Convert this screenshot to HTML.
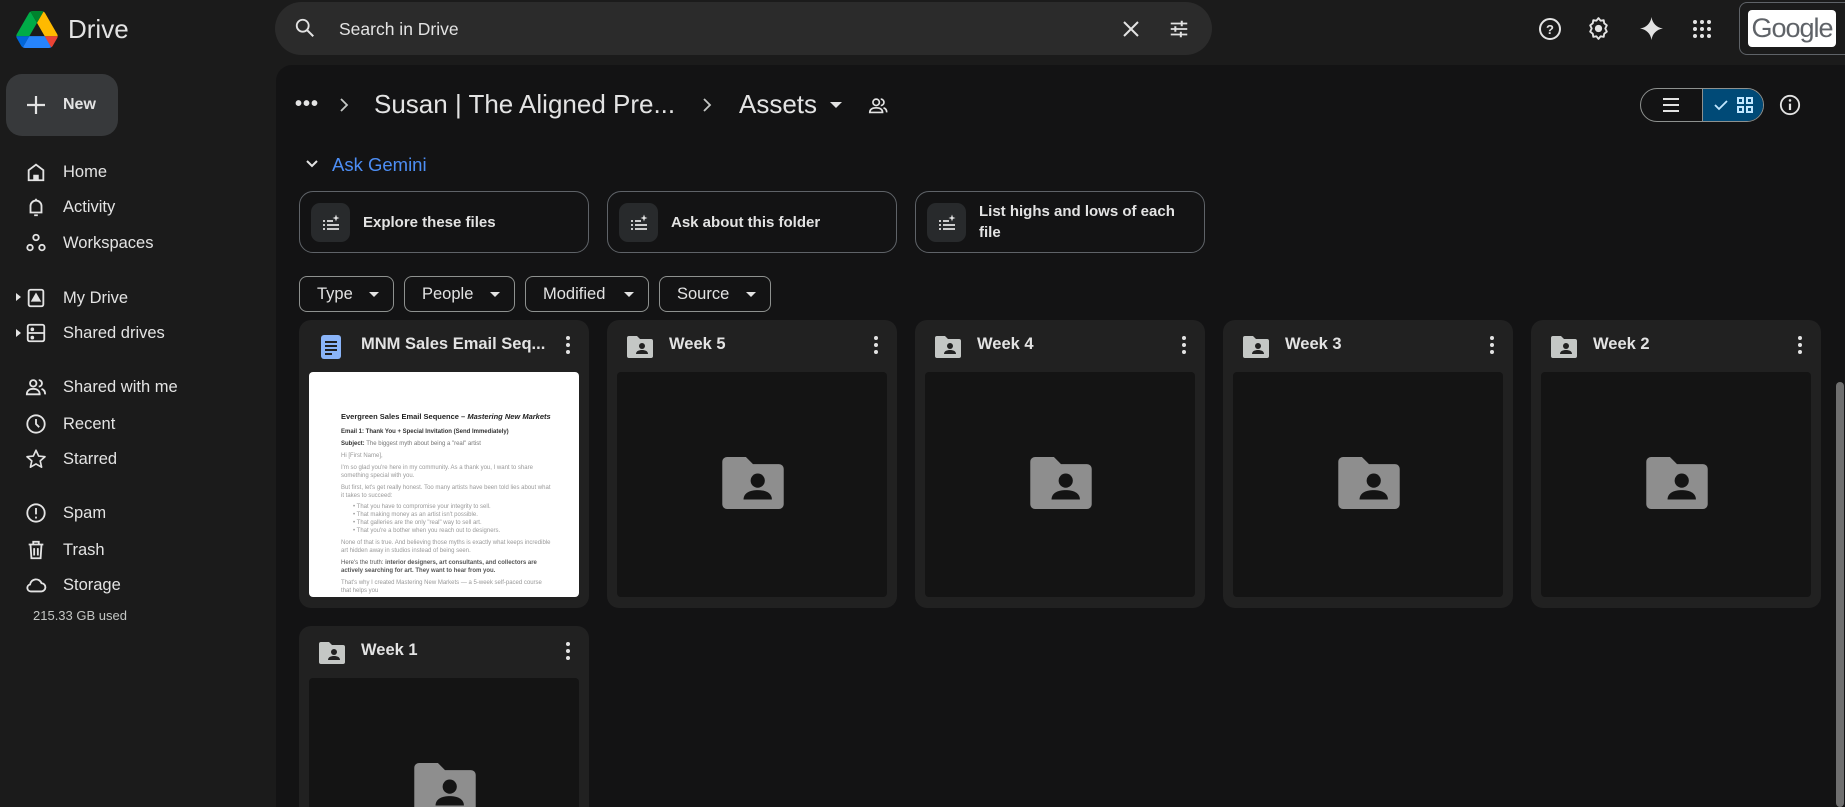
<!DOCTYPE html>
<html><head><meta charset="utf-8"><style>
*{box-sizing:border-box;margin:0;padding:0}
html,body{width:1845px;height:807px;overflow:hidden}
body{background:#1b1b1b;font-family:"Liberation Sans",Arial,sans-serif;color:#e3e3e3}
#w{position:relative;width:1845px;height:807px;overflow:hidden}
.a{position:absolute}
svg{display:block}
.nav{position:absolute;left:0;width:276px;height:34px;font-size:16.5px;display:flex;align-items:center}
.nav svg{position:absolute;left:25px}
.nav span{position:absolute;left:63px}
.gc{position:absolute;top:191px;width:290px;height:62px;border:1px solid #5f6368;border-radius:14px;display:flex;align-items:center;font-size:15px;font-weight:bold;color:#e3e3e3}
.gc .ic{position:absolute;left:11px;top:11px;width:39px;height:39px;border-radius:9px;background:#282a2c}
.gc .ic svg{margin:10px}
.gc span{position:absolute;left:63px;line-height:21px}
.chip{position:absolute;top:276px;height:36px;border:1px solid #8e918f;border-radius:8px;font-size:16.5px;display:flex;align-items:center;padding-left:17px}
.chip:after{content:"";position:absolute;right:14px;top:15px;border:5px solid transparent;border-top-color:#e3e3e3}
.card{position:absolute;width:290px;height:288px;background:#212121;border-radius:12px;overflow:hidden}
.card .t{position:absolute;left:62px;top:15px;font-size:16.5px;font-weight:bold;color:#e3e3e3}
.card .fi{position:absolute;left:18px;top:13px}
.card .m{position:absolute;right:18px;top:15px}
.card .th{position:absolute;left:10px;top:52px;width:270px;height:225px;background:#141414;border-radius:4px}
.card .big{position:absolute;left:105px;top:85px}
</style></head><body><div id="w">
<svg class="a" style="left:15px;top:11px" width="44" height="37" viewBox="0 0 87.3 78"><path d="M6.6 66.85l3.85 6.65c.8 1.4 1.950 2.5 3.3 3.3L27.5 53H0c0 1.55.4 3.1 1.2 4.5z" fill="#0066da"/><path d="M43.65 25L29.9 1.2c-1.35.8-2.5 1.9-3.3 3.3l-25.4 44A9.06 9.06 0 000 53h27.5z" fill="#00ac47"/><path d="M73.55 76.8c1.35-.8 2.5-1.9 3.3-3.3l1.6-2.75 7.65-13.25c.8-1.4 1.2-2.95 1.2-4.5H59.8l5.85 11.5z" fill="#ea4335"/><path d="M43.65 25L57.4 1.2C56.05.4 54.5 0 52.9 0H34.4c-1.6 0-3.15.45-4.5 1.2z" fill="#00832d"/><path d="M59.8 53H27.5L13.75 76.8c1.35.8 2.9 1.2 4.5 1.2h50.8c1.6 0 3.150-.45 4.5-1.2z" fill="#2684fc"/><path d="M73.4 26.5l-12.7-22c-.8-1.4-1.95-2.5-3.3-3.3L43.65 25 59.8 53h27.45c0-1.55-.4-3.1-1.2-4.5z" fill="#ffba00"/></svg>
<div class="a" style="left:68px;top:14px;font-size:26px;color:#e3e3e3">Drive</div>
<div class="a" style="left:275px;top:2px;width:937px;height:53px;background:#2b2b2b;border-radius:27px"></div>
<svg class="a" style="left:294px;top:17px" width="22" height="22" viewBox="0 0 24 24"><circle cx="9.5" cy="9.5" r="6.5" fill="none" stroke="#e3e3e3" stroke-width="2"/><path d="M14.5 14.5L21 21" stroke="#e3e3e3" stroke-width="2.2"/></svg>
<div class="a" style="left:339px;top:19px;font-size:17.5px;color:#e3e3e3">Search in Drive</div>
<svg class="a" style="left:1121px;top:19px" width="20" height="20" viewBox="0 0 20 20"><path d="M3 3L17 17M17 3L3 17" stroke="#e3e3e3" stroke-width="2"/></svg>
<svg class="a" style="left:1168px;top:18px" width="22" height="22" viewBox="0 0 24 24" fill="none" stroke="#e3e3e3" stroke-width="2"><path d="M3 6h18M3 12h18M3 18h18"/><path d="M15 3v6M8 9v6M14 15v6" stroke-width="2.2"/></svg>
<svg class="a" style="left:1538px;top:17px" width="24" height="24" viewBox="0 0 24 24"><circle cx="12" cy="12" r="10" fill="none" stroke="#e3e3e3" stroke-width="2"/><text x="12" y="17" text-anchor="middle" font-size="13" font-weight="bold" fill="#e3e3e3" font-family="Liberation Sans">?</text></svg>
<svg class="a" style="left:1586px;top:16px" width="25" height="25" viewBox="0 0 24 24"><path d="M12 2l2 2.5 3-.5.5 3 2.5 2-1.5 3 1.5 3-2.5 2-.5 3-3-.5-2 2.5-2-2.5-3 .5-.5-3-2.5-2 1.5-3-1.5-3 2.5-2 .5-3 3 .5z" fill="none" stroke="#e3e3e3" stroke-width="1.8" stroke-linejoin="round"/><circle cx="12" cy="12" r="3.5" fill="#e3e3e3"/></svg>
<svg class="a" style="left:1639px;top:16px" width="25" height="25" viewBox="0 0 24 24"><path d="M12 1C12.8 7 17 11.2 23 12 17 12.8 12.8 17 12 23 11.2 17 7 12.8 1 12 7 11.2 11.2 7 12 1z" fill="#e3e3e3"/></svg>
<svg class="a" style="left:1692px;top:19px" width="20" height="20" viewBox="0 0 20 20" fill="#e3e3e3"><circle cx="3" cy="3" r="2"/><circle cx="10" cy="3" r="2"/><circle cx="17" cy="3" r="2"/><circle cx="3" cy="10" r="2"/><circle cx="10" cy="10" r="2"/><circle cx="17" cy="10" r="2"/><circle cx="3" cy="17" r="2"/><circle cx="10" cy="17" r="2"/><circle cx="17" cy="17" r="2"/></svg>
<div class="a" style="left:1739px;top:2px;width:120px;height:53px;border:1px solid #5f6368;border-radius:8px"></div>
<div class="a" style="left:1748px;top:10px;width:88px;height:37px;background:#fff;border-radius:4px;color:#5f6368;font-size:27px;text-align:center;line-height:37px;letter-spacing:-1px">Google</div>
<div class="a" style="left:6px;top:74px;width:112px;height:62px;background:#37393b;border-radius:16px"></div>
<svg class="a" style="left:26px;top:95px" width="20" height="20" viewBox="0 0 20 20"><path d="M10 1v18M1 10h18" stroke="#e3e3e3" stroke-width="2.2"/></svg>
<div class="a" style="left:63px;top:96px;font-size:16px;font-weight:bold">New</div>
<div class="nav" style="top:155px"><svg width="22" height="22" viewBox="0 0 24 24" fill="none" stroke="#e3e3e3" stroke-width="2"><path d="M4 21V10l8-6 8 6v11z"/><path d="M10 21v-5h4v5" fill="#e3e3e3"/></svg><span>Home</span></div>
<div class="nav" style="top:190px"><svg width="22" height="22" viewBox="0 0 24 24" fill="none" stroke="#e3e3e3" stroke-width="2"><path d="M6 18V11a6 6 0 0112 0v7H5h14M12 3v2M10 21h4"/></svg><span>Activity</span></div>
<div class="nav" style="top:226px"><svg width="22" height="22" viewBox="0 0 24 24" fill="none" stroke="#e3e3e3" stroke-width="2"><circle cx="12" cy="6" r="3"/><circle cx="5.5" cy="17" r="3"/><circle cx="18.5" cy="17" r="3"/></svg><span>Workspaces</span></div>
<div class="a" style="left:16px;top:293px;border:4px solid transparent;border-left:5px solid #e3e3e3"></div>
<div class="nav" style="top:281px"><svg width="22" height="22" viewBox="0 0 24 24" fill="none" stroke="#e3e3e3" stroke-width="2"><rect x="4" y="3" width="16" height="18" rx="2"/><path d="M8 15h8l-4-7z" fill="#e3e3e3"/></svg><span>My Drive</span></div>
<div class="a" style="left:16px;top:329px;border:4px solid transparent;border-left:5px solid #e3e3e3"></div>
<div class="nav" style="top:316px"><svg width="22" height="22" viewBox="0 0 24 24" fill="none" stroke="#e3e3e3" stroke-width="2"><rect x="3" y="3" width="18" height="18" rx="2"/><path d="M3 12h18"/><circle cx="8" cy="8" r="1" fill="#e3e3e3"/><circle cx="8" cy="17" r="1" fill="#e3e3e3"/></svg><span>Shared drives</span></div>
<div class="nav" style="top:370px"><svg width="22" height="22" viewBox="0 0 24 24" fill="none" stroke="#e3e3e3" stroke-width="2"><circle cx="9" cy="8" r="3.5"/><path d="M2 20c0-4 3-6 7-6s7 2 7 6zM15 4.5a3.5 3.5 0 010 7M18 14c2.5.8 4 2.5 4 6"/></svg><span>Shared with me</span></div>
<div class="nav" style="top:407px"><svg width="22" height="22" viewBox="0 0 24 24" fill="none" stroke="#e3e3e3" stroke-width="2"><circle cx="12" cy="12" r="9.5"/><path d="M12 6.5V12l3.5 3.5"/></svg><span>Recent</span></div>
<div class="nav" style="top:442px"><svg width="22" height="22" viewBox="0 0 24 24" fill="none" stroke="#e3e3e3" stroke-width="1.8" stroke-linejoin="round"><path d="M12 2.5l2.9 6.3 6.9.7-5.2 4.6 1.5 6.8L12 17.4l-6.1 3.5 1.5-6.8-5.2-4.6 6.9-.7z"/></svg><span>Starred</span></div>
<div class="nav" style="top:496px"><svg width="22" height="22" viewBox="0 0 24 24" fill="none" stroke="#e3e3e3" stroke-width="2"><circle cx="12" cy="12" r="9.5"/><path d="M12 6.5v7M12 16v2"/></svg><span>Spam</span></div>
<div class="nav" style="top:533px"><svg width="22" height="22" viewBox="0 0 24 24" fill="none" stroke="#e3e3e3" stroke-width="2"><path d="M4 6h16M9 6V3h6v3M6 6l1 15h10l1-15M10 10v8M14 10v8"/></svg><span>Trash</span></div>
<div class="nav" style="top:568px"><svg width="22" height="22" viewBox="0 0 24 24" fill="none" stroke="#e3e3e3" stroke-width="2"><path d="M6.5 19h11a4.5 4.5 0 00.5-9 6.5 6.5 0 00-12.5 1.5A3.8 3.8 0 006.5 19z"/></svg><span>Storage</span></div>
<div class="a" style="left:33px;top:608px;font-size:13px;color:#c4c7c5">215.33 GB used</div>
<div class="a" style="left:276px;top:65px;width:1569px;height:742px;background:#131314;border-radius:16px 0 0 0"></div>
<div class="a" style="left:295px;top:93px;font-size:20px;font-weight:bold;letter-spacing:1px">•••</div>
<svg class="a" style="left:337px;top:96px" width="14" height="18" viewBox="0 0 14 18"><path d="M4 3l6 6-6 6" fill="none" stroke="#c4c7c5" stroke-width="1.8"/></svg>
<div class="a" style="left:374px;top:89px;font-size:26px;color:#e3e3e3">Susan | The Aligned Pre...</div>
<svg class="a" style="left:700px;top:96px" width="14" height="18" viewBox="0 0 14 18"><path d="M4 3l6 6-6 6" fill="none" stroke="#c4c7c5" stroke-width="1.8"/></svg>
<div class="a" style="left:739px;top:89px;font-size:26px;color:#e3e3e3">Assets</div>
<div class="a" style="left:830px;top:102px;border:6px solid transparent;border-top:6px solid #e3e3e3"></div>
<svg class="a" style="left:867px;top:95px" width="22" height="22" viewBox="0 0 24 24" fill="none" stroke="#e3e3e3" stroke-width="1.8"><circle cx="10" cy="8" r="3.5"/><path d="M3 19c0-3.5 3-5 7-5s7 1.5 7 5zM15 4.5a3.5 3.5 0 010 7M18 14c2 .6 3.5 2 3.5 5"/></svg>
<div class="a" style="left:1640px;top:88px;width:124px;height:34px;border:1px solid #8e918f;border-radius:17px;overflow:hidden"><div style="position:absolute;left:61px;top:0;width:63px;height:34px;background:#004a77;border-left:1px solid #8e918f"></div></div>
<svg class="a" style="left:1662px;top:97px" width="18" height="16" viewBox="0 0 18 16"><path d="M1 2h16M1 8h16M1 14h16" stroke="#e3e3e3" stroke-width="2"/></svg>
<svg class="a" style="left:1713px;top:97px" width="16" height="16" viewBox="0 0 16 16"><path d="M2 8l4 4 8-8" fill="none" stroke="#c2e7ff" stroke-width="1.8"/></svg>
<svg class="a" style="left:1737px;top:97px" width="16" height="16" viewBox="0 0 16 16" fill="none" stroke="#c2e7ff" stroke-width="2"><rect x="1" y="1" width="5" height="5"/><rect x="10" y="1" width="5" height="5"/><rect x="1" y="10" width="5" height="5"/><rect x="10" y="10" width="5" height="5"/></svg>
<svg class="a" style="left:1779px;top:94px" width="22" height="22" viewBox="0 0 24 24"><circle cx="12" cy="12" r="10" fill="none" stroke="#e3e3e3" stroke-width="2"/><path d="M12 10.5v7" stroke="#e3e3e3" stroke-width="2.4"/><circle cx="12" cy="7" r="1.4" fill="#e3e3e3"/></svg>
<svg class="a" style="left:305px;top:157px" width="14" height="14" viewBox="0 0 14 14"><path d="M2 4l5 5 5-5" fill="none" stroke="#e3e3e3" stroke-width="2"/></svg>
<div class="a" style="left:332px;top:154px;font-size:18.5px;color:#4d8ef5">Ask Gemini</div>
<div class="gc" style="left:299px"><div class="ic"><svg width="20" height="20" viewBox="0 0 20 20" fill="none" stroke="#e3e3e3" stroke-width="1.8"><path d="M2 8h2M6 8h6M2 12h2M6 12h12M2 16h2M6 16h12"/><path d="M15 1.5l.9 2.6 2.6.9-2.6.9-.9 2.6-.9-2.6-2.6-.9 2.6-.9z" fill="#e3e3e3" stroke="none"/></svg></div><span>Explore these files</span></div>
<div class="gc" style="left:607px"><div class="ic"><svg width="20" height="20" viewBox="0 0 20 20" fill="none" stroke="#e3e3e3" stroke-width="1.8"><path d="M2 8h2M6 8h6M2 12h2M6 12h12M2 16h2M6 16h12"/><path d="M15 1.5l.9 2.6 2.6.9-2.6.9-.9 2.6-.9-2.6-2.6-.9 2.6-.9z" fill="#e3e3e3" stroke="none"/></svg></div><span>Ask about this folder</span></div>
<div class="gc" style="left:915px"><div class="ic"><svg width="20" height="20" viewBox="0 0 20 20" fill="none" stroke="#e3e3e3" stroke-width="1.8"><path d="M2 8h2M6 8h6M2 12h2M6 12h12M2 16h2M6 16h12"/><path d="M15 1.5l.9 2.6 2.6.9-2.6.9-.9 2.6-.9-2.6-2.6-.9 2.6-.9z" fill="#e3e3e3" stroke="none"/></svg></div><span>List highs and lows of each<br>file</span></div>
<div class="chip" style="left:299px;width:95px">Type</div>
<div class="chip" style="left:404px;width:111px">People</div>
<div class="chip" style="left:525px;width:124px">Modified</div>
<div class="chip" style="left:659px;width:112px">Source</div>
<div class="card" style="left:299px;top:320px">
<svg class="fi" width="24" height="26" viewBox="0 0 24 26" style="left:20px;top:14px"><rect x="2" y="1" width="20" height="24" rx="3" fill="#8ab4f8"/><path d="M6 8h12M6 12h12M6 16h12M6 20h7" stroke="#1f1f1f" stroke-width="2"/></svg>
<div class="t">MNM Sales Email Seq...</div>
<svg class="m" width="6" height="20" viewBox="0 0 6 20" fill="#e3e3e3"><circle cx="3" cy="3" r="2"/><circle cx="3" cy="10" r="2"/><circle cx="3" cy="17" r="2"/></svg>
<div class="th" style="background:#fff;overflow:hidden;color:#444;font-size:6px;padding:40px 28px 0 32px;line-height:8px">
<div style="font-size:7.5px;font-weight:bold;line-height:10px;color:#222">Evergreen Sales Email Sequence – <i>Mastering New Markets</i></div>
<div style="margin-top:6px;font-weight:bold;color:#333">Email 1: Thank You + Special Invitation (Send Immediately)</div>
<div style="margin-top:4px;color:#777"><b style="color:#333">Subject:</b> The biggest myth about being a "real" artist</div>
<div style="margin-top:4px;color:#999">Hi [First Name],</div>
<div style="margin-top:4px;color:#999">I'm so glad you're here in my community. As a thank you, I want to share something special with you.</div>
<div style="margin-top:4px;color:#999">But first, let's get really honest. Too many artists have been told lies about what it takes to succeed:</div>
<div style="margin-top:3px;color:#999;padding-left:12px">• That you have to compromise your integrity to sell.<br>• That making money as an artist isn't possible.<br>• That galleries are the only "real" way to sell art.<br>• That you're a bother when you reach out to designers.</div>
<div style="margin-top:4px;color:#999">None of that is true. And believing those myths is exactly what keeps incredible art hidden away in studios instead of being seen.</div>
<div style="margin-top:4px;color:#555">Here's the truth: <b>interior designers, art consultants, and collectors are actively searching for art. They want to hear from you.</b></div>
<div style="margin-top:4px;color:#999">That's why I created Mastering New Markets — a 5-week self-paced course that helps you</div>
<div style="margin-top:3px;color:#999;padding-left:12px">• Clarify your vision so you know exactly where you want your art career to go</div>
</div>
</div>
<div class="card" style="left:607px;top:320px"><svg class="fi" width="26" height="22" viewBox="0 0 26 22" style="left:20px;top:16px"><path d="M0 2a2 2 0 012-2h8l3 3h11a2 2 0 012 2v15a2 2 0 01-2 2H2a2 2 0 01-2-2z" fill="#c4c7c5"/><circle cx="15" cy="10" r="3" fill="#212121"/><path d="M9 18c0-3 3-4 6-4s6 1 6 4z" fill="#212121"/></svg><div class="t">Week 5</div><svg class="m" width="6" height="20" viewBox="0 0 6 20" fill="#e3e3e3"><circle cx="3" cy="3" r="2"/><circle cx="3" cy="10" r="2"/><circle cx="3" cy="17" r="2"/></svg><div class="th"><svg class="big" width="62" height="52" viewBox="0 0 26 22"><path d="M0 2a2 2 0 012-2h8l3 3h11a2 2 0 012 2v15a2 2 0 01-2 2H2a2 2 0 01-2-2z" fill="#8e8e8e"/><circle cx="15" cy="10" r="3" fill="#141414"/><path d="M9 18c0-3 3-4 6-4s6 1 6 4z" fill="#141414"/></svg></div></div>
<div class="card" style="left:915px;top:320px"><svg class="fi" width="26" height="22" viewBox="0 0 26 22" style="left:20px;top:16px"><path d="M0 2a2 2 0 012-2h8l3 3h11a2 2 0 012 2v15a2 2 0 01-2 2H2a2 2 0 01-2-2z" fill="#c4c7c5"/><circle cx="15" cy="10" r="3" fill="#212121"/><path d="M9 18c0-3 3-4 6-4s6 1 6 4z" fill="#212121"/></svg><div class="t">Week 4</div><svg class="m" width="6" height="20" viewBox="0 0 6 20" fill="#e3e3e3"><circle cx="3" cy="3" r="2"/><circle cx="3" cy="10" r="2"/><circle cx="3" cy="17" r="2"/></svg><div class="th"><svg class="big" width="62" height="52" viewBox="0 0 26 22"><path d="M0 2a2 2 0 012-2h8l3 3h11a2 2 0 012 2v15a2 2 0 01-2 2H2a2 2 0 01-2-2z" fill="#8e8e8e"/><circle cx="15" cy="10" r="3" fill="#141414"/><path d="M9 18c0-3 3-4 6-4s6 1 6 4z" fill="#141414"/></svg></div></div>
<div class="card" style="left:1223px;top:320px"><svg class="fi" width="26" height="22" viewBox="0 0 26 22" style="left:20px;top:16px"><path d="M0 2a2 2 0 012-2h8l3 3h11a2 2 0 012 2v15a2 2 0 01-2 2H2a2 2 0 01-2-2z" fill="#c4c7c5"/><circle cx="15" cy="10" r="3" fill="#212121"/><path d="M9 18c0-3 3-4 6-4s6 1 6 4z" fill="#212121"/></svg><div class="t">Week 3</div><svg class="m" width="6" height="20" viewBox="0 0 6 20" fill="#e3e3e3"><circle cx="3" cy="3" r="2"/><circle cx="3" cy="10" r="2"/><circle cx="3" cy="17" r="2"/></svg><div class="th"><svg class="big" width="62" height="52" viewBox="0 0 26 22"><path d="M0 2a2 2 0 012-2h8l3 3h11a2 2 0 012 2v15a2 2 0 01-2 2H2a2 2 0 01-2-2z" fill="#8e8e8e"/><circle cx="15" cy="10" r="3" fill="#141414"/><path d="M9 18c0-3 3-4 6-4s6 1 6 4z" fill="#141414"/></svg></div></div>
<div class="card" style="left:1531px;top:320px"><svg class="fi" width="26" height="22" viewBox="0 0 26 22" style="left:20px;top:16px"><path d="M0 2a2 2 0 012-2h8l3 3h11a2 2 0 012 2v15a2 2 0 01-2 2H2a2 2 0 01-2-2z" fill="#c4c7c5"/><circle cx="15" cy="10" r="3" fill="#212121"/><path d="M9 18c0-3 3-4 6-4s6 1 6 4z" fill="#212121"/></svg><div class="t">Week 2</div><svg class="m" width="6" height="20" viewBox="0 0 6 20" fill="#e3e3e3"><circle cx="3" cy="3" r="2"/><circle cx="3" cy="10" r="2"/><circle cx="3" cy="17" r="2"/></svg><div class="th"><svg class="big" width="62" height="52" viewBox="0 0 26 22"><path d="M0 2a2 2 0 012-2h8l3 3h11a2 2 0 012 2v15a2 2 0 01-2 2H2a2 2 0 01-2-2z" fill="#8e8e8e"/><circle cx="15" cy="10" r="3" fill="#141414"/><path d="M9 18c0-3 3-4 6-4s6 1 6 4z" fill="#141414"/></svg></div></div>
<div class="card" style="left:299px;top:626px;height:181px;border-radius:12px 12px 0 0"><svg class="fi" width="26" height="22" viewBox="0 0 26 22" style="left:20px;top:16px"><path d="M0 2a2 2 0 012-2h8l3 3h11a2 2 0 012 2v15a2 2 0 01-2 2H2a2 2 0 01-2-2z" fill="#c4c7c5"/><circle cx="15" cy="10" r="3" fill="#212121"/><path d="M9 18c0-3 3-4 6-4s6 1 6 4z" fill="#212121"/></svg><div class="t">Week 1</div><svg class="m" width="6" height="20" viewBox="0 0 6 20" fill="#e3e3e3"><circle cx="3" cy="3" r="2"/><circle cx="3" cy="10" r="2"/><circle cx="3" cy="17" r="2"/></svg><div class="th"><svg class="big" width="62" height="52" viewBox="0 0 26 22"><path d="M0 2a2 2 0 012-2h8l3 3h11a2 2 0 012 2v15a2 2 0 01-2 2H2a2 2 0 01-2-2z" fill="#8e8e8e"/><circle cx="15" cy="10" r="3" fill="#141414"/><path d="M9 18c0-3 3-4 6-4s6 1 6 4z" fill="#141414"/></svg></div></div>
<div class="a" style="left:1836px;top:382px;width:8px;height:425px;background:#6f6f6f;border-radius:4px"></div>
</div></body></html>
